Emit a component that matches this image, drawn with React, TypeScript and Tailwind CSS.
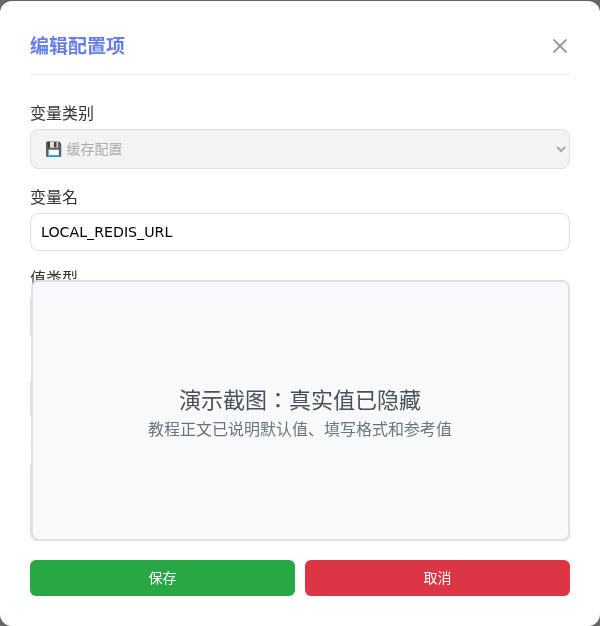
import { X } from "lucide-react";

const font = "font-['DejaVu_Sans','Noto_Sans_CJK_JP',sans-serif]";

function Label({ children }: { children: string }) {
  return <label className="block text-[16px] leading-[22px] text-[#333] mb-[4px]">{children}</label>;
}

export default function App() {
  return (
    <div className={`h-[626px] w-[600px] overflow-hidden bg-[#666] pt-px ${font}`}>
      <div className="relative flex h-[625px] flex-col rounded-xl bg-white px-[30px] will-change-transform">
        <div className="mt-[29px] flex h-[44px] items-start justify-between border-b border-[#eee] box-content">
          <h2 className="mt-px text-[19px] leading-[30px] font-bold text-[#667eea]">编辑配置项</h2>
          <button className="mr-[-2px] text-[#999]">
            <X size={24} strokeWidth={1.8} className="mt-1" />
          </button>
        </div>

        <div className="mt-[28px] flex-1">
          <div className="mb-[18px]">
            <Label>变量类别</Label>
            <select disabled className="h-10 w-full rounded-lg border border-[#e2e2e2] bg-[#f3f3f3] px-2.5 text-[14px] text-[#aaa] appearance-auto">
              <option>💾 缓存配置</option>
            </select>
          </div>
          <div className="mb-[17px]">
            <Label>变量名</Label>
            <input readOnly value="LOCAL_REDIS_URL" className="h-[38px] w-full rounded-lg border border-[#ddd] bg-white px-2.5 text-[14.2px] text-black" />
          </div>
          <div className="mb-[10px]">
            <Label>值类型</Label>
            <input readOnly className="h-[46px] w-full rounded-md border border-[#ddd] bg-white" />
          </div>
          <div className="mb-[16px]">
            <Label>变量值</Label>
            <input readOnly className="h-[43px] w-full rounded-md border border-[#ddd] bg-white" />
          </div>
          <div>
            <Label>注释</Label>
            <textarea readOnly className="block h-[80px] w-full rounded-md border border-[#ddd] bg-white" />
          </div>
        </div>

        <div className="mb-[30px] flex gap-[10px] text-[14px] text-white">
          <button className="h-9 flex-1 rounded-md bg-[#28a745] pt-px">保存</button>
          <button className="h-9 flex-1 rounded-md bg-[#dc3545] pt-px">取消</button>
        </div>

        <div className="absolute top-[279px] left-[31px] flex h-[261px] w-[539px] flex-col items-center justify-center rounded-lg border-2 border-[#dfe1e8] bg-[#f8f9fb] pt-[5px] pr-px">
          <div className="text-[22px] leading-[33px] text-[#495057]">演示截图：真实值已隐藏</div>
          <div className="text-[16px] leading-[24px] mt-px text-[#6c757d]">教程正文已说明默认值、填写格式和参考值</div>
        </div>
      </div>
    </div>
  );
}
